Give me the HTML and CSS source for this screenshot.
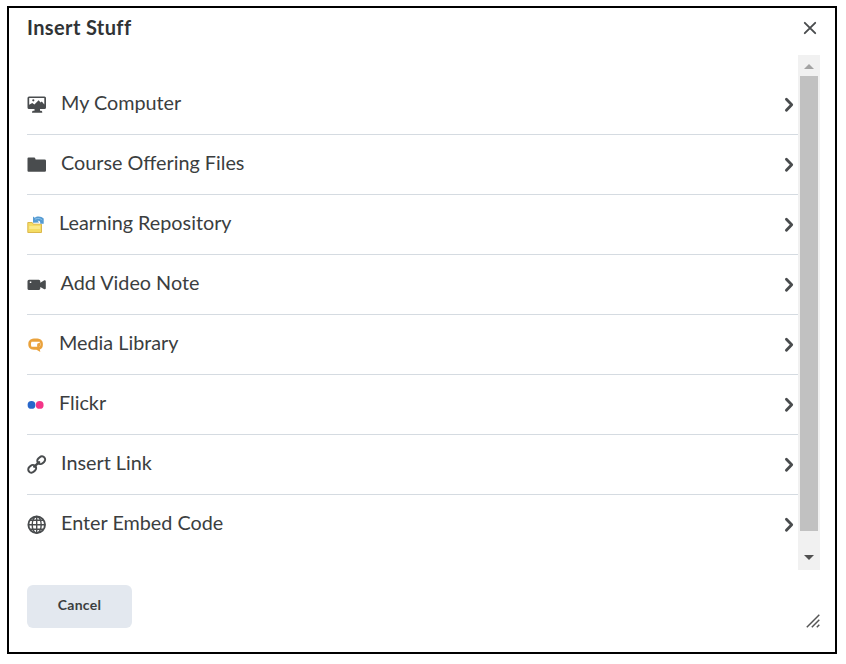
FILE: index.html
```
<!DOCTYPE html>
<html lang="en">
<head>
<meta charset="utf-8">
<title>Insert Stuff</title>
<link rel="stylesheet" href="styles.css">
</head>
<body>
<div class="dialog">
  <header class="header">
    <h1 class="title">Insert Stuff</h1>
    <svg class="close" width="14" height="14" viewBox="0 0 14 14"><path d="M1.800 1.800l10.400 10.400M12.200 1.800L1.800 12.200"/></svg>
  </header>
  <div class="body">
    <ul class="list">
      <li class="row">
        <svg class="icon" width="20" height="20" viewBox="0 0 20 20"><path fill="#494c4e" fill-rule="evenodd" d="M2 1.500h15.500A1.500 1.500 0 0 1 19 3v9.500a1.500 1.500 0 0 1-1.500 1.500H13v1.700h1.300q1 .2 1 2H5q0-1.800 1-2h1.500V14H2a1.500 1.500 0 0 1-1.500-1.500V3A1.500 1.500 0 0 1 2 1.500zm.2 1.600v6.700l3-1.800 2.200 1.400 4.200-4.200 2 2.200 1.200-.8 2.500 2.900V3.100z"/><circle cx="6.300" cy="5.300" r="1.100" fill="#494c4e"/></svg>
        <span class="label">My Computer</span><svg class="chevron" width="10" height="16" viewBox="0 0 10 16"><path d="M2.400 2.200L7.700 7.700l-5.300 5.500"/></svg>
      </li>
      <li class="row">
        <svg class="icon" width="20" height="20" viewBox="0 0 20 20"><path fill="#494c4e" d="M1.500 2.500h5.700q.8 0 1 .8l.4 1.200h9q1.400 0 1.400 1.300v9.700q0 1.300-1.300 1.300H1.500q-1 0-1-1V3.500q0-1 1-1z"/></svg>
        <span class="label">Course Offering Files</span><svg class="chevron" width="10" height="16" viewBox="0 0 10 16"><path d="M2.400 2.200L7.700 7.700l-5.300 5.500"/></svg>
      </li>
      <li class="row small">
        <svg class="icon" width="18" height="20" viewBox="0 0 18 20"><path fill="#f4dc63" stroke="#dcb84c" d="M.8 7.500h4.400l1 1.700h8.300v8.300H.8z"/><path fill="#fae98b" d="M2.200 11h10.900v3H2.200z"/><path fill="#559bd3" d="M6 1.500l1.700 1.300c2.300-2 6.800-1.600 9 .7v5.200h-3.400c.2-2.300-.8-3.200-2.700-2.900l1.600 1.600L6 7.800z"/><path fill="none" stroke="#8cc3ea" d="M8 4.200q5-2 7 1"/></svg>
        <span class="label">Learning Repository</span><svg class="chevron" width="10" height="16" viewBox="0 0 10 16"><path d="M2.400 2.200L7.700 7.700l-5.300 5.500"/></svg>
      </li>
      <li class="row video">
        <svg class="icon" width="20" height="20" viewBox="0 0 20 20"><path fill="#494c4e" fill-rule="evenodd" d="M2 4.800h9.800q1.500 0 1.500 1.500v1.500l4-2.500q1.500-.3 1.500 1v7q0 1.300-1.500 1l-4-2.300v1.600q0 1.400-1.500 1.400H2q-1.500 0-1.500-1.500V6.300Q.5 4.800 2 4.800zm.8 1.600v1.500h1.500V6.400z"/></svg>
        <span class="label">Add Video Note</span><svg class="chevron" width="10" height="16" viewBox="0 0 10 16"><path d="M2.400 2.200L7.700 7.700l-5.300 5.500"/></svg>
      </li>
      <li class="row small">
        <svg class="icon" width="18" height="20" viewBox="0 0 18 20"><path fill="#eaa23c" fill-rule="evenodd" d="M8.700 3.500c4.700 0 7.200 1.700 7.200 5.700 0 3-.9 4.600-3.100 5.200l.5 2.600-3.800-2.200H8.700c-5 0-7.400-1.600-7.400-5.600s2.400-5.700 7.400-5.700zM4.500 6.700c-.7 1.500-.7 3.500 0 5h5.700V9.800l2.600 2c.8-1.400.8-3.600 0-5.100z"/><path fill="#eaa23c" d="M10.200 8.700l2.800-1.200v4.200l-2.800-1.200z"/></svg>
        <span class="label">Media Library</span><svg class="chevron" width="10" height="16" viewBox="0 0 10 16"><path d="M2.400 2.200L7.700 7.700l-5.300 5.500"/></svg>
      </li>
      <li class="row small">
        <svg class="icon" width="18" height="20" viewBox="0 0 18 20"><circle cx="4.500" cy="9.900" r="3.900" fill="#2867cb"/><circle cx="12.700" cy="9.900" r="3.900" fill="#f43588"/></svg>
        <span class="label">Flickr</span><svg class="chevron" width="10" height="16" viewBox="0 0 10 16"><path d="M2.400 2.200L7.700 7.700l-5.300 5.500"/></svg>
      </li>
      <li class="row">
        <svg class="icon" width="20" height="20" viewBox="0 0 20 20"><g fill="none" stroke="#494c4e" stroke-width="2"><rect x="-4.200" y="-3.200" width="8.400" height="6.400" rx="3.200" transform="translate(14.200 5.200) rotate(-42)"/><rect x="-4.200" y="-3.200" width="8.400" height="6.400" rx="3.200" transform="translate(5.200 13.800) rotate(-42)"/><path stroke-width="2.300" stroke-linecap="round" d="M7.200 11.700l5-4.500"/></g></svg>
        <span class="label">Insert Link</span><svg class="chevron" width="10" height="16" viewBox="0 0 10 16"><path d="M2.400 2.200L7.700 7.700l-5.300 5.500"/></svg>
      </li>
      <li class="row">
        <svg class="icon" width="20" height="20" viewBox="0 0 20 20"><g fill="none" stroke="#494c4e" stroke-width="1.400"><circle cx="9.700" cy="9.800" r="8.300" stroke-width="1.900"/><ellipse cx="9.700" cy="9.800" rx="4.500" ry="8.300"/><path d="M9.700 1.500v16.600M1.500 9.800h16.400M3 5.300h13.400M3 14.300h13.400"/></g></svg>
        <span class="label">Enter Embed Code</span><svg class="chevron" width="10" height="16" viewBox="0 0 10 16"><path d="M2.400 2.200L7.700 7.700l-5.300 5.500"/></svg>
      </li>
    </ul>
    <div class="scrollbar">
      <svg class="arrow" width="22" height="21" viewBox="0 0 22 21"><path fill="#a3a3a3" d="M6 14l5-5 5 5z"/></svg>
      <div class="thumb"></div>
      <svg class="arrow" width="22" height="21" viewBox="0 0 22 21"><path fill="#505050" d="M6 7h10l-5 5z"/></svg>
    </div>
  </div>
  <footer class="footer">
    <button class="cancel">Cancel</button>
    <svg class="grip" width="14" height="14" viewBox="0 0 14 14"><path d="M.8 13.200L13.300.7M5.800 13.200l7.500-7.500M10.800 13.200l2.500-2.500"/></svg>
  </footer>
</div>
</body>
</html>
```
FILE: styles.css
```
* { box-sizing: border-box; }
body {
  margin: 0;
  padding: 6px 0 0 7px;
  background: #fff;
  color: #3b3e40;
  font-family: Lato, "Liberation Sans", sans-serif;
}
.dialog {
  display: flex;
  flex-direction: column;
  width: 830px;
  height: 648px;
  padding: 0 15px 0 18px;
  border: 2px solid #000;
}
.header {
  display: flex;
  justify-content: space-between;
  height: 47px;
  padding-top: 7px;
}
.title {
  margin: 0;
  color: #303335;
  font-size: 20px;
  font-weight: 700;
  line-height: 24px;
  letter-spacing: .38px;
}
.close { margin: 6px 3px 0 0; }
.close path { fill: none; stroke: #494c4e; stroke-width: 1.9; stroke-linecap: round; }
.body { display: flex; height: 515px; }
.list {
  flex: 1;
  margin: 0;
  padding: 20px 0 0;
  list-style: none;
}
.row {
  display: flex;
  align-items: center;
  height: 60px;
  border-bottom: 1px solid #d5dbe1;
}
.row:last-child { border-bottom-color: transparent; }
.icon { flex: none; margin-right: 14px; }
.video .icon { margin-right: 13.500px; }
.label {
  flex: 1;
  padding-bottom: 5px;
  font-size: 19.800px;
  line-height: 26px;
}
.chevron { margin-right: 4px; }
.chevron path { fill: none; stroke: #494c4e; stroke-width: 2.8; stroke-linecap: round; stroke-linejoin: round; }
.scrollbar {
  display: flex;
  flex-direction: column;
  width: 22px;
  background: #f1f1f1;
}
.arrow { display: block; }
.thumb { height: 455px; margin: 0 2px; background: #c1c1c1; }
.scrollbar .arrow:last-child { margin-top: 17px; }
.footer {
  display: flex;
  justify-content: space-between;
  padding-top: 15px;
}
.cancel {
  width: 105px;
  height: 43px;
  padding: 0 0 3px;
  border: 0;
  border-radius: 6px;
  background: #e3e8ef;
  color: #3b3e40;
  font: 700 14px/20px Lato, "Liberation Sans", sans-serif;
  letter-spacing: .3px;
}
.grip { margin-top: 29px; }
.grip path { fill: none; stroke: #555; stroke-width: 1.5; }
```
